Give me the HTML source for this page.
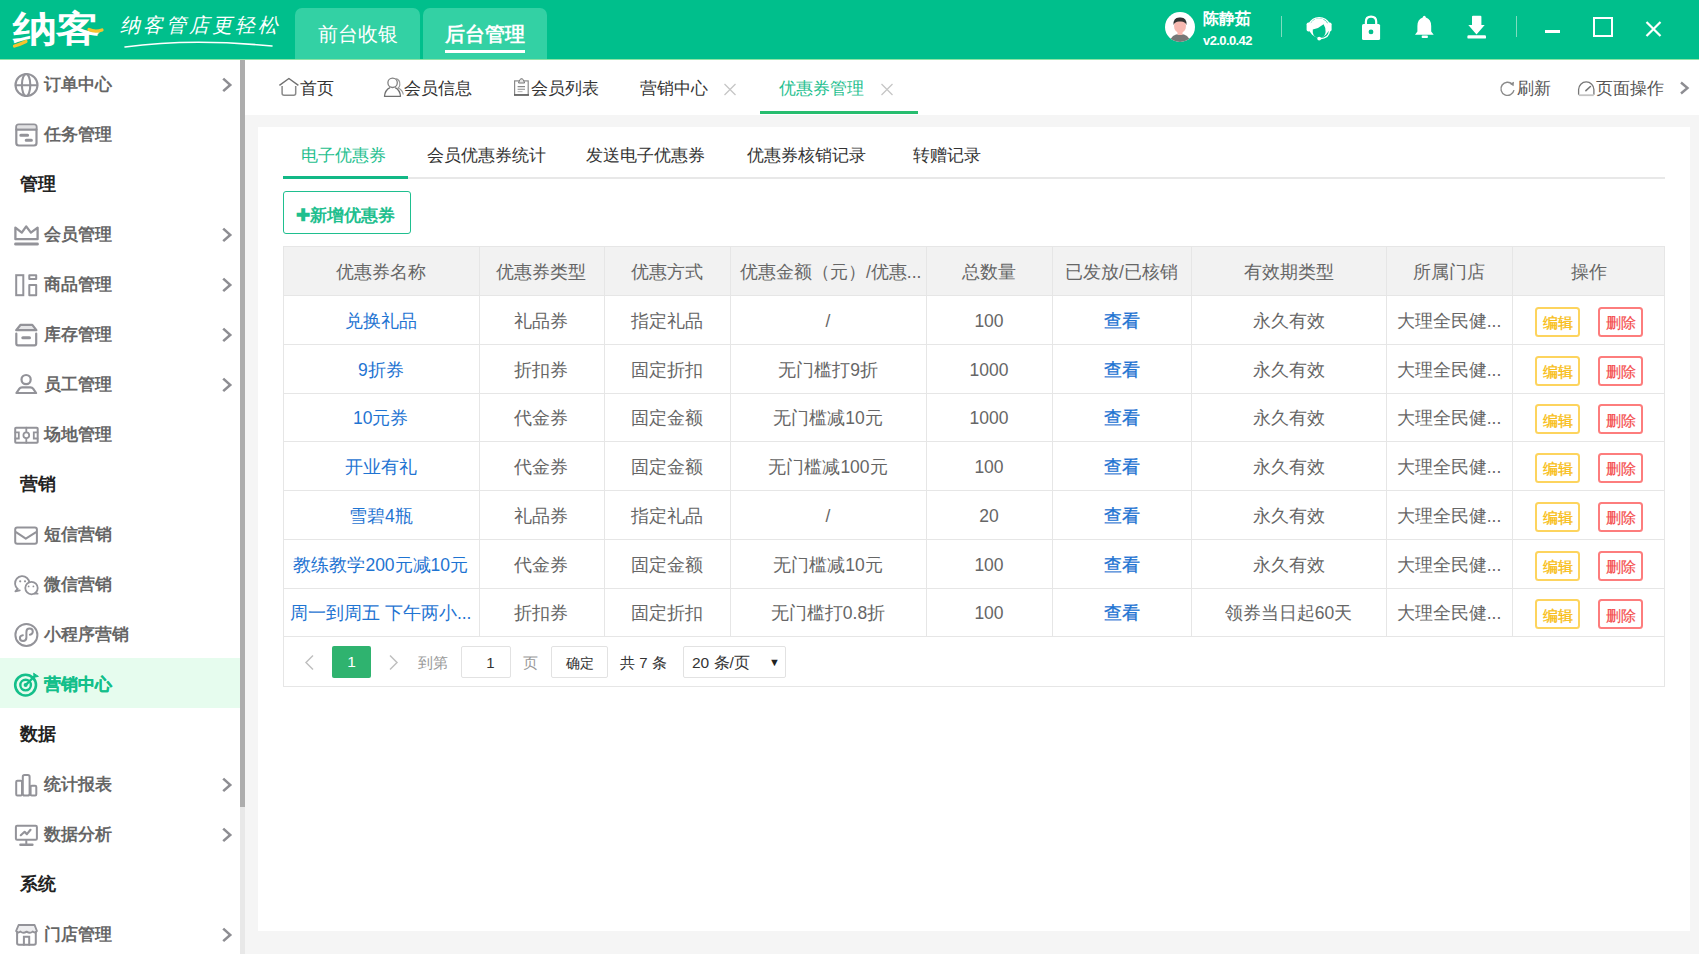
<!DOCTYPE html>
<html><head><meta charset="utf-8">
<style>
*{margin:0;padding:0;box-sizing:border-box}
html,body{width:1699px;height:954px;overflow:hidden;background:#f5f5f5;font-family:"Liberation Sans",sans-serif;position:relative}
.abs{position:absolute}
svg.abs{overflow:visible}
.t{position:absolute;white-space:nowrap}
</style></head><body>
<div class="abs" style="left:0px;top:0px;width:1699px;height:59px;background:#00bf8c"></div>
<div class="abs" style="left:0px;top:59px;width:1699px;height:1px;background:#8fe3a6"></div>
<div class="t" style="left:13px;top:9.00px;font-size:41px;height:41px;line-height:41px;color:#fff;font-weight:900;letter-spacing:-1px;transform:scale(1.08,0.88);transform-origin:0 50%;">纳客</div>
<svg class="abs" style="left:0px;top:0px" width="120" height="58" viewBox="0 0 120 58"><path d="M14.5 46 Q20 44.5 26 41.5" stroke="#f7c32e" stroke-width="3.2" fill="none" stroke-linecap="round"/><path d="M89 29.5 Q95 32.5 102 30" stroke="#f7c32e" stroke-width="3.2" fill="none" stroke-linecap="round"/></svg>
<div class="t" style="left:120px;top:15.00px;font-size:20px;height:20px;line-height:20px;color:#fff;font-weight:300;font-style:italic;letter-spacing:3px;">纳客管店更轻松</div>
<svg class="abs" style="left:120px;top:38px" width="160" height="12" viewBox="0 0 160 12"><path d="M5 9 Q70 0 152 8" stroke="#fff" stroke-width="1.6" fill="none" stroke-linecap="round"/></svg>
<div class="abs" style="left:295px;top:8px;width:125px;height:51px;background:#33d1a4;border-radius:7px 7px 0 0"></div>
<div class="abs" style="left:423px;top:8px;width:124px;height:51px;background:#33d1a4;border-radius:7px 7px 0 0"></div>
<div class="t" style="left:57.5px;width:600px;text-align:center;top:24.00px;font-size:20px;height:20px;line-height:20px;color:#fff;font-weight:normal;">前台收银</div>
<div class="t" style="left:185px;width:600px;text-align:center;top:24.00px;font-size:20px;height:20px;line-height:20px;color:#fff;font-weight:bold;">后台管理</div>
<div class="abs" style="left:445px;top:49.5px;width:80px;height:3px;background:#fff"></div>
<svg class="abs" style="left:1165px;top:12px" width="30" height="30" viewBox="0 0 30 30"><circle cx="15" cy="15" r="15" fill="#fff"/><clipPath id="cav"><circle cx="15" cy="15" r="15"/></clipPath><g clip-path="url(#cav)"><path d="M5 30 Q6 22 15 22 Q24 22 25 30Z" fill="#777"/><rect x="12.5" y="18" width="5" height="5" fill="#f7b8b0"/><ellipse cx="15" cy="14" rx="6" ry="7" fill="#f7b8b0"/><path d="M8.5 13 Q8 5 15 5.5 Q22 5 21.5 13 Q20 9 15 9.5 Q10 9 8.5 13Z" fill="#333"/></g></svg>
<div class="t" style="left:1203px;top:11.00px;font-size:16px;height:16px;line-height:16px;color:#fff;font-weight:bold;">陈静茹</div>
<div class="t" style="left:1203px;top:33.50px;font-size:13px;height:13px;line-height:13px;color:#fff;font-weight:bold;letter-spacing:-0.6px;">v2.0.0.42</div>
<div class="abs" style="left:1281px;top:16px;width:1px;height:21px;background:#7fdcbf"></div>
<svg class="abs" style="left:0;top:0" width="1699" height="60" viewBox="0 0 1699 60"><path d="M1309.2 24 A11 11 0 0 1 1329.2 24" fill="none" stroke="#fff" stroke-width="1.4"/><circle cx="1319" cy="28" r="9.7" fill="#fff"/><path d="M1312.8 29.6 Q1318.5 28.5 1323.6 24.2 Q1325.8 27.5 1325.6 32 Q1325.2 37.4 1319.3 37.8 Q1313.6 37.8 1312.8 32.5Z" fill="#00bf8c"/><rect x="1306.6" y="22.5" width="4.6" height="9" rx="1.8" fill="#fff"/><rect x="1327" y="22.5" width="4.6" height="9" rx="1.8" fill="#fff"/><path d="M1329.5 31 Q1329 38 1320 38.8" fill="none" stroke="#fff" stroke-width="1.4"/><circle cx="1319.2" cy="38.6" r="1.9" fill="#fff"/><path d="M1365.9 25 V21.8 Q1365.9 16.6 1371.05 16.6 Q1376.2 16.6 1376.2 21.8 V25" fill="none" stroke="#fff" stroke-width="2.2"/><rect x="1362" y="24" width="18.1" height="16.1" rx="1.6" fill="#fff"/><circle cx="1371" cy="31.9" r="2.4" fill="#00bf8c"/><path d="M1424.3 15.8 Q1425.6 15.8 1425.9 17.6 Q1431.2 19.5 1431.2 26 V31.5 L1433.7 34.8 H1415 L1417.4 31.5 V26 Q1417.4 19.5 1422.7 17.6 Q1423 15.8 1424.3 15.8Z" fill="#fff"/><rect x="1421.7" y="35.6" width="6.2" height="2.5" rx="0.8" fill="#fff"/><path d="M1473 15.8 H1480.4 Q1481.4 15.8 1481.4 16.8 V24.9 H1484.7 L1476.5 34.4 L1468.3 24.9 H1472 V16.8 Q1472 15.8 1473 15.8Z" fill="#fff"/><rect x="1467.4" y="35.2" width="18.6" height="3.4" rx="1.2" fill="#fff"/></svg>
<div class="abs" style="left:1516px;top:16px;width:1px;height:21px;background:#7fdcbf"></div>
<div class="abs" style="left:1545px;top:30px;width:15px;height:2.5px;background:#fff"></div>
<div class="abs" style="left:1593px;top:17px;width:20px;height:20px;border:2.2px solid #fff"></div>
<svg class="abs" style="left:1645px;top:21px" width="17" height="16" viewBox="0 0 17 16"><path d="M1.5 1 L15.5 15 M15.5 1 L1.5 15" stroke="#fff" stroke-width="2.2"/></svg>
<div class="abs" style="left:0px;top:60px;width:240px;height:894px;background:#fff"></div>
<div class="abs" style="left:240px;top:60px;width:5px;height:894px;background:#e8e8e8"></div>
<div class="abs" style="left:240px;top:60px;width:5px;height:747px;background:#adadad"></div>
<div class="abs" style="left:245px;top:60px;width:13px;height:894px;background:#f5f5f5"></div>
<div class="abs" style="left:0px;top:658px;width:240px;height:50px;background:#e6fcee"></div>
<div class="t" style="left:43.5px;top:75.75px;font-size:16.5px;height:16.5px;line-height:16.5px;color:#666;font-weight:bold;">订单中心</div>
<div class="t" style="left:43.5px;top:125.75px;font-size:16.5px;height:16.5px;line-height:16.5px;color:#666;font-weight:bold;">任务管理</div>
<div class="t" style="left:20px;top:175.00px;font-size:18px;height:18px;line-height:18px;color:#222;font-weight:bold;">管理</div>
<div class="t" style="left:43.5px;top:225.75px;font-size:16.5px;height:16.5px;line-height:16.5px;color:#666;font-weight:bold;">会员管理</div>
<div class="t" style="left:43.5px;top:275.75px;font-size:16.5px;height:16.5px;line-height:16.5px;color:#666;font-weight:bold;">商品管理</div>
<div class="t" style="left:43.5px;top:325.75px;font-size:16.5px;height:16.5px;line-height:16.5px;color:#666;font-weight:bold;">库存管理</div>
<div class="t" style="left:43.5px;top:375.75px;font-size:16.5px;height:16.5px;line-height:16.5px;color:#666;font-weight:bold;">员工管理</div>
<div class="t" style="left:43.5px;top:425.75px;font-size:16.5px;height:16.5px;line-height:16.5px;color:#666;font-weight:bold;">场地管理</div>
<div class="t" style="left:20px;top:475.00px;font-size:18px;height:18px;line-height:18px;color:#222;font-weight:bold;">营销</div>
<div class="t" style="left:43.5px;top:525.75px;font-size:16.5px;height:16.5px;line-height:16.5px;color:#666;font-weight:bold;">短信营销</div>
<div class="t" style="left:43.5px;top:575.75px;font-size:16.5px;height:16.5px;line-height:16.5px;color:#666;font-weight:bold;">微信营销</div>
<div class="t" style="left:43.5px;top:625.75px;font-size:16.5px;height:16.5px;line-height:16.5px;color:#666;font-weight:bold;">小程序营销</div>
<div class="t" style="left:43.5px;top:675.75px;font-size:16.5px;height:16.5px;line-height:16.5px;color:#14bf8a;font-weight:bold;-webkit-text-stroke:0.25px #14bf8a;">营销中心</div>
<div class="t" style="left:20px;top:725.00px;font-size:18px;height:18px;line-height:18px;color:#222;font-weight:bold;">数据</div>
<div class="t" style="left:43.5px;top:775.75px;font-size:16.5px;height:16.5px;line-height:16.5px;color:#666;font-weight:bold;">统计报表</div>
<div class="t" style="left:43.5px;top:825.75px;font-size:16.5px;height:16.5px;line-height:16.5px;color:#666;font-weight:bold;">数据分析</div>
<div class="t" style="left:20px;top:875.00px;font-size:18px;height:18px;line-height:18px;color:#222;font-weight:bold;">系统</div>
<div class="t" style="left:43.5px;top:925.75px;font-size:16.5px;height:16.5px;line-height:16.5px;color:#666;font-weight:bold;">门店管理</div>
<svg class="abs" style="left:0;top:0" width="240" height="954" viewBox="0 0 240 954"><circle cx="26.5" cy="85" r="11" fill="none" stroke="#939399" stroke-width="2.1" stroke-linecap="round" stroke-linejoin="round"/><ellipse cx="26.1" cy="85" rx="4.2" ry="11" fill="none" stroke="#939399" stroke-width="2.1" stroke-linecap="round" stroke-linejoin="round"/><path d="M15.8 85.3 H37.2" fill="none" stroke="#939399" stroke-width="2.1" stroke-linecap="round" stroke-linejoin="round"/><rect x="16.3" y="124.5" width="20.2" height="21" rx="2.5" fill="none" stroke="#939399" stroke-width="2.2" stroke-linecap="round" stroke-linejoin="round"/><rect x="17.3" y="125.6" width="18.2" height="3" fill="#e2e2e4"/><path d="M16.3 129.6 H36.5" fill="none" stroke="#939399" stroke-width="2.1" stroke-linecap="round" stroke-linejoin="round"/><path d="M20.8 135.3 H27.6 M26.2 140.3 H31.4" fill="none" stroke="#939399" stroke-width="3" stroke-linecap="round" stroke-linejoin="round"/><path d="M15.4 227.6 L21.8 232.6 L26.2 226.4 L30.9 232.6 L37.6 227.6 V239.2 H15.4 Z" fill="none" stroke="#939399" stroke-width="2.3" stroke-linecap="round" stroke-linejoin="round"/><rect x="14.2" y="242.4" width="24.6" height="3.2" rx="1.4" fill="#939399"/><rect x="16.2" y="275.2" width="7.1" height="20" fill="none" stroke="#939399" stroke-width="2" stroke-linecap="round" stroke-linejoin="miter"/><rect x="29.3" y="275.2" width="6.9" height="3.8" fill="none" stroke="#939399" stroke-width="2" stroke-linecap="round" stroke-linejoin="round"/><rect x="29.3" y="284.9" width="6.9" height="10.3" fill="none" stroke="#939399" stroke-width="2" stroke-linecap="round" stroke-linejoin="round"/><path d="M20.6 324.8 H32.3 L36.4 330.2 H16.2 Z" fill="#e6e6e8" stroke="#939399" stroke-width="2.2" stroke-linecap="round" stroke-linejoin="round"/><path d="M16.3 333.6 V343.6 Q16.3 345.4 18 345.4 H34.5 Q36.2 345.4 36.2 343.6 V333.6" fill="none" stroke="#939399" stroke-width="2.2" stroke-linecap="round" stroke-linejoin="round"/><path d="M22.8 337.8 H29.5" fill="none" stroke="#939399" stroke-width="3" stroke-linecap="round" stroke-linejoin="round"/><circle cx="26.1" cy="379.6" r="4.6" fill="none" stroke="#939399" stroke-width="2.2" stroke-linecap="round" stroke-linejoin="round"/><path d="M16.4 393 L19.4 388.6 Q20.3 387.3 22 387.3 H30.5 Q32.2 387.3 33.1 388.6 L36.1 393 Z" fill="none" stroke="#939399" stroke-width="2.2" stroke-linecap="round" stroke-linejoin="round"/><rect x="15.2" y="427.7" width="22.5" height="15.1" rx="0.8" fill="none" stroke="#939399" stroke-width="2" stroke-linecap="round" stroke-linejoin="round"/><path d="M26.3 427.7 V442.8" fill="none" stroke="#939399" stroke-width="1.8" stroke-linecap="round" stroke-linejoin="round"/><circle cx="26.3" cy="435.3" r="2.9" fill="#fff" stroke="#939399" stroke-width="1.8" stroke-linecap="round" stroke-linejoin="round"/><path d="M15.4 432.4 H18.8 V438.5 H15.4 M37.5 432.4 H33.8 V438.5 H37.5" fill="none" stroke="#939399" stroke-width="1.8" stroke-linecap="round" stroke-linejoin="miter"/><rect x="15.2" y="527.6" width="21.7" height="16.1" rx="2" fill="none" stroke="#939399" stroke-width="2" stroke-linecap="round" stroke-linejoin="round"/><path d="M16 532.2 L25.8 538.7 L36.1 532.2" fill="none" stroke="#939399" stroke-width="2" stroke-linecap="round" stroke-linejoin="round"/><path d="M17.6 588.9 A7.2 7.2 0 1 1 27.6 588.2" fill="none" stroke="#939399" stroke-width="1.8" stroke-linecap="round" stroke-linejoin="round"/><path d="M17.6 588.9 L15.4 591.3 L19.8 590.3" fill="none" stroke="#939399" stroke-width="1.8" stroke-linecap="round" stroke-linejoin="round"/><circle cx="20.2" cy="581.3" r="1.1" fill="#939399"/><circle cx="25" cy="581.3" r="1.1" fill="#939399"/><circle cx="31.5" cy="588.1" r="6.2" fill="#fff" stroke="#939399" stroke-width="1.8" stroke-linecap="round" stroke-linejoin="round"/><path d="M35.8 592.6 L37.7 593.8 L34.2 593.8" fill="none" stroke="#939399" stroke-width="1.6" stroke-linecap="round" stroke-linejoin="round"/><circle cx="28.6" cy="586.4" r="0.9" fill="#939399"/><circle cx="33.4" cy="586.4" r="0.9" fill="#939399"/><circle cx="26.4" cy="634.9" r="11" fill="none" stroke="#939399" stroke-width="2" stroke-linecap="round" stroke-linejoin="round"/><path d="M29.9 634.7 Q32.8 634.3 32.8 631.6 Q32.8 628.6 29.6 628.6 Q26.4 628.6 26.4 632 V637.6 Q26.4 641 23.1 641 Q19.9 641 19.9 638 Q19.9 635.5 22.9 635.2" fill="none" stroke="#939399" stroke-width="2" stroke-linecap="round" stroke-linejoin="round"/><circle cx="25.6" cy="685.1" r="10.4" fill="none" stroke="#14bf8a" stroke-width="2.6"/><circle cx="25.6" cy="685.1" r="5.3" fill="none" stroke="#14bf8a" stroke-width="2.4"/><circle cx="25.6" cy="685.1" r="2" fill="#14bf8a"/><path d="M25.6 685.1 L34.6 676.1" stroke="#14bf8a" stroke-width="2.3"/><path d="M33.6 673.2 L38.4 676.4 L34.3 677.2Z" fill="#14bf8a" stroke="#14bf8a" stroke-width="1" stroke-linejoin="round"/><rect x="16.2" y="780.7" width="5.8" height="14.8" rx="1.2" fill="none" stroke="#939399" stroke-width="2" stroke-linecap="round" stroke-linejoin="round"/><rect x="22.8" y="774.9" width="6.8" height="20.6" rx="1.8" fill="none" stroke="#939399" stroke-width="2" stroke-linecap="round" stroke-linejoin="round"/><rect x="30.6" y="785.8" width="5.7" height="9.7" rx="1.2" fill="none" stroke="#939399" stroke-width="2" stroke-linecap="round" stroke-linejoin="round"/><rect x="15.9" y="825.7" width="21" height="14" rx="1.2" fill="none" stroke="#939399" stroke-width="2" stroke-linecap="round" stroke-linejoin="round"/><path d="M26.3 840.7 V844.5" fill="none" stroke="#939399" stroke-width="2" stroke-linecap="round" stroke-linejoin="round"/><path d="M20.4 844.8 H32.4" fill="none" stroke="#939399" stroke-width="2.4" stroke-linecap="round" stroke-linejoin="round"/><path d="M20.8 835.2 L24.6 831.8 L26.9 834.1 L30.5 829.8" fill="none" stroke="#939399" stroke-width="2.2" stroke-linecap="round" stroke-linejoin="round"/><path d="M18.6 925 H34.6 L36.9 931 Q35.3 933.6 32.6 931.6 Q30 933.9 26.6 931.6 Q23.2 933.9 20.6 931.6 Q17.8 933.6 16.1 931 Z" fill="#eeeef0" stroke="#939399" stroke-width="1.9" stroke-linecap="round" stroke-linejoin="round"/><path d="M17.1 932 V943 Q17.1 944.8 18.9 944.8 H34 Q35.8 944.8 35.8 943 V932" fill="none" stroke="#939399" stroke-width="2" stroke-linecap="round" stroke-linejoin="round"/><path d="M23.9 944.8 V936.8 H29.2 V944.8" fill="none" stroke="#939399" stroke-width="2" stroke-linecap="round" stroke-linejoin="miter"/><path d="M223.2 78.6 L230.2 84.9 L223.2 91.1" fill="none" stroke="#8d8d92" stroke-width="2.6"/><path d="M223.2 228.6 L230.2 234.9 L223.2 241.1" fill="none" stroke="#8d8d92" stroke-width="2.6"/><path d="M223.2 278.6 L230.2 284.9 L223.2 291.1" fill="none" stroke="#8d8d92" stroke-width="2.6"/><path d="M223.2 328.6 L230.2 334.9 L223.2 341.1" fill="none" stroke="#8d8d92" stroke-width="2.6"/><path d="M223.2 378.6 L230.2 384.9 L223.2 391.1" fill="none" stroke="#8d8d92" stroke-width="2.6"/><path d="M223.2 778.6 L230.2 784.9 L223.2 791.1" fill="none" stroke="#8d8d92" stroke-width="2.6"/><path d="M223.2 828.6 L230.2 834.9 L223.2 841.1" fill="none" stroke="#8d8d92" stroke-width="2.6"/><path d="M223.2 928.6 L230.2 934.9 L223.2 941.1" fill="none" stroke="#8d8d92" stroke-width="2.6"/></svg>
<div class="abs" style="left:245px;top:60px;width:1454px;height:55px;background:#fff"></div>
<div class="abs" style="left:245px;top:115px;width:1454px;height:12px;background:#f5f5f5"></div>
<svg class="abs" style="left:0;top:0" width="700" height="110" viewBox="0 0 700 110"><path d="M279.4 85.4 L288.9 78.5 L298.4 85.4" fill="none" stroke="#707070" stroke-width="1.4" stroke-linejoin="round"/><path d="M282.1 86 V93.2 Q282.1 95.2 284.1 95.2 H293.7 Q295.7 95.2 295.7 93.2 V86" fill="none" stroke="#8a8a8a" stroke-width="1.5"/><circle cx="392.6" cy="82.8" r="4.7" fill="none" stroke="#808080" stroke-width="1.3"/><path d="M390 87.6 Q385 90 384.5 96.3 H400.5 Q400 90 395.2 87.6" fill="none" stroke="#707070" stroke-width="1.3" stroke-linejoin="round"/><path d="M395.5 78.6 Q400.4 79.6 399.8 85 Q399.5 87 398.2 88 Q402.5 90 403.3 94.5" fill="none" stroke="#999" stroke-width="1.2"/><rect x="514.6" y="80.9" width="13.6" height="14" fill="none" stroke="#8a8a8a" stroke-width="1.2"/><path d="M514 95 H529" stroke="#555" stroke-width="1.4"/><path d="M519.3 80.9 L520.6 78.8 H522.5 L523.8 80.9 L524.6 83 H518.5Z" fill="#e6e6e6" stroke="#777" stroke-width="1"/><path d="M517.6 86.6 H525 M517.6 89.2 H525" stroke="#888" stroke-width="1.1"/><path d="M517.6 91.6 H522.5" stroke="#bbb" stroke-width="1.1"/></svg>
<div class="t" style="left:300px;top:80.00px;font-size:17px;height:17px;line-height:17px;color:#333;font-weight:normal;">首页</div>
<div class="t" style="left:404px;top:80.00px;font-size:17px;height:17px;line-height:17px;color:#333;font-weight:normal;">会员信息</div>
<div class="t" style="left:531px;top:80.00px;font-size:17px;height:17px;line-height:17px;color:#333;font-weight:normal;">会员列表</div>
<div class="t" style="left:640px;top:80.00px;font-size:17px;height:17px;line-height:17px;color:#333;font-weight:normal;">营销中心</div>
<svg class="abs" style="left:723px;top:83px" width="14" height="13" viewBox="0 0 14 13"><path d="M1.5 1 L12.5 12 M12.5 1 L1.5 12" stroke="#c6c6c6" stroke-width="1.3"/></svg>
<div class="t" style="left:779px;top:80.00px;font-size:17px;height:17px;line-height:17px;color:#1fbf8f;font-weight:normal;">优惠券管理</div>
<svg class="abs" style="left:880px;top:83px" width="14" height="13" viewBox="0 0 14 13"><path d="M1.5 1 L12.5 12 M12.5 1 L1.5 12" stroke="#c6c6c6" stroke-width="1.3"/></svg>
<div class="abs" style="left:760px;top:111px;width:158px;height:3px;background:#27bd6f"></div>
<svg class="abs" style="left:1499px;top:80px" width="17" height="17" viewBox="0 0 17 17"><path d="M13.3 4.2 A6.6 6.6 0 1 0 15 10.2" stroke="#8a8a8a" stroke-width="1.4" fill="none"/><path d="M10.6 3.7 L15 1.8 L14.6 6.3Z" fill="#8a8a8a"/></svg>
<div class="t" style="left:1517px;top:80.00px;font-size:17px;height:17px;line-height:17px;color:#555;font-weight:normal;">刷新</div>
<svg class="abs" style="left:1577px;top:80px" width="19" height="17" viewBox="0 0 19 17"><path d="M1.6 14.8 V9.6 A7.65 7.65 0 0 1 16.9 9.6 V14.8" stroke="#777" stroke-width="1.3" fill="none"/><path d="M1.8 15.2 H16.7" stroke="#c4c4c4" stroke-width="1.8"/><path d="M8.9 10.6 L13.4 6.5" stroke="#777" stroke-width="1.6" stroke-linecap="round"/></svg>
<div class="t" style="left:1596px;top:80.00px;font-size:17px;height:17px;line-height:17px;color:#555;font-weight:normal;">页面操作</div>
<svg class="abs" style="left:1679px;top:81px" width="11" height="14" viewBox="0 0 11 14"><path d="M2 1.5 L8.5 7 L2 12.5" stroke="#8d8d92" stroke-width="2.4" fill="none"/></svg>
<div class="abs" style="left:258px;top:127px;width:1432px;height:804px;background:#fff"></div>
<div class="abs" style="left:1690px;top:115px;width:9px;height:839px;background:#f5f5f5"></div>
<div class="abs" style="left:258px;top:931px;width:1441px;height:23px;background:#f5f5f5"></div>
<div class="abs" style="left:283px;top:177px;width:1382px;height:1.5px;background:#e8e8e8"></div>
<div class="abs" style="left:283px;top:175.5px;width:125px;height:3px;background:#12b886"></div>
<div class="t" style="left:301px;top:146.50px;font-size:17px;height:17px;line-height:17px;color:#1fbf8f;font-weight:normal;">电子优惠券</div>
<div class="t" style="left:427px;top:146.50px;font-size:17px;height:17px;line-height:17px;color:#333;font-weight:normal;">会员优惠券统计</div>
<div class="t" style="left:586px;top:146.50px;font-size:17px;height:17px;line-height:17px;color:#333;font-weight:normal;">发送电子优惠券</div>
<div class="t" style="left:747px;top:146.50px;font-size:17px;height:17px;line-height:17px;color:#333;font-weight:normal;">优惠券核销记录</div>
<div class="t" style="left:913px;top:146.50px;font-size:17px;height:17px;line-height:17px;color:#333;font-weight:normal;">转赠记录</div>
<div class="abs" style="left:283px;top:191px;width:128px;height:43px;border:1.5px solid #1fbf8f;border-radius:3px"></div>
<div class="t" style="left:296px;top:206.50px;font-size:17px;height:17px;line-height:17px;color:#1fbf8f;font-weight:bold;">✚新增优惠券</div>
<div class="abs" style="left:283px;top:246px;width:1382px;height:49px;background:#f2f2f2"></div>
<div class="abs" style="left:283px;top:246px;width:1382px;height:441px;border:1px solid #e6e6e6"></div>
<div class="abs" style="left:283px;top:295px;width:1382px;height:1px;background:#e6e6e6"></div>
<div class="abs" style="left:283px;top:344px;width:1382px;height:1px;background:#e6e6e6"></div>
<div class="abs" style="left:283px;top:393px;width:1382px;height:1px;background:#e6e6e6"></div>
<div class="abs" style="left:283px;top:441px;width:1382px;height:1px;background:#e6e6e6"></div>
<div class="abs" style="left:283px;top:490px;width:1382px;height:1px;background:#e6e6e6"></div>
<div class="abs" style="left:283px;top:539px;width:1382px;height:1px;background:#e6e6e6"></div>
<div class="abs" style="left:283px;top:588px;width:1382px;height:1px;background:#e6e6e6"></div>
<div class="abs" style="left:283px;top:636px;width:1382px;height:1px;background:#e6e6e6"></div>
<div class="abs" style="left:478.5px;top:246px;width:1px;height:390px;background:#e6e6e6"></div>
<div class="abs" style="left:604px;top:246px;width:1px;height:390px;background:#e6e6e6"></div>
<div class="abs" style="left:730px;top:246px;width:1px;height:390px;background:#e6e6e6"></div>
<div class="abs" style="left:926px;top:246px;width:1px;height:390px;background:#e6e6e6"></div>
<div class="abs" style="left:1052px;top:246px;width:1px;height:390px;background:#e6e6e6"></div>
<div class="abs" style="left:1191px;top:246px;width:1px;height:390px;background:#e6e6e6"></div>
<div class="abs" style="left:1386px;top:246px;width:1px;height:390px;background:#e6e6e6"></div>
<div class="abs" style="left:1512px;top:246px;width:1px;height:390px;background:#e6e6e6"></div>
<div class="t" style="left:80.75px;width:600px;text-align:center;top:264.25px;font-size:17.5px;height:17.5px;line-height:17.5px;color:#666;font-weight:normal;">优惠券名称</div>
<div class="t" style="left:241.25px;width:600px;text-align:center;top:264.25px;font-size:17.5px;height:17.5px;line-height:17.5px;color:#666;font-weight:normal;">优惠券类型</div>
<div class="t" style="left:367.0px;width:600px;text-align:center;top:264.25px;font-size:17.5px;height:17.5px;line-height:17.5px;color:#666;font-weight:normal;">优惠方式</div>
<div class="t" style="left:740px;top:264.25px;font-size:17.5px;height:17.5px;line-height:17.5px;color:#666;font-weight:normal;">优惠金额（元）/优惠...</div>
<div class="t" style="left:689.0px;width:600px;text-align:center;top:264.25px;font-size:17.5px;height:17.5px;line-height:17.5px;color:#666;font-weight:normal;">总数量</div>
<div class="t" style="left:821.5px;width:600px;text-align:center;top:264.25px;font-size:17.5px;height:17.5px;line-height:17.5px;color:#666;font-weight:normal;">已发放/已核销</div>
<div class="t" style="left:988.5px;width:600px;text-align:center;top:264.25px;font-size:17.5px;height:17.5px;line-height:17.5px;color:#666;font-weight:normal;">有效期类型</div>
<div class="t" style="left:1149.0px;width:600px;text-align:center;top:264.25px;font-size:17.5px;height:17.5px;line-height:17.5px;color:#666;font-weight:normal;">所属门店</div>
<div class="t" style="left:1288.5px;width:600px;text-align:center;top:264.25px;font-size:17.5px;height:17.5px;line-height:17.5px;color:#666;font-weight:normal;">操作</div>
<div class="t" style="left:80.75px;width:600px;text-align:center;top:312.75px;font-size:17.5px;height:17.5px;line-height:17.5px;color:#1f74d2;font-weight:normal;">兑换礼品</div>
<div class="t" style="left:241.25px;width:600px;text-align:center;top:312.75px;font-size:17.5px;height:17.5px;line-height:17.5px;color:#666;font-weight:normal;">礼品券</div>
<div class="t" style="left:367.0px;width:600px;text-align:center;top:312.75px;font-size:17.5px;height:17.5px;line-height:17.5px;color:#666;font-weight:normal;">指定礼品</div>
<div class="t" style="left:528.0px;width:600px;text-align:center;top:312.75px;font-size:17.5px;height:17.5px;line-height:17.5px;color:#666;font-weight:normal;">/</div>
<div class="t" style="left:689.0px;width:600px;text-align:center;top:312.75px;font-size:17.5px;height:17.5px;line-height:17.5px;color:#666;font-weight:normal;">100</div>
<div class="t" style="left:821.5px;width:600px;text-align:center;top:312.75px;font-size:17.5px;height:17.5px;line-height:17.5px;color:#1f74d2;font-weight:normal;-webkit-text-stroke:0.3px #1f74d2;">查看</div>
<div class="t" style="left:988.5px;width:600px;text-align:center;top:312.75px;font-size:17.5px;height:17.5px;line-height:17.5px;color:#666;font-weight:normal;">永久有效</div>
<div class="t" style="left:1149.0px;width:600px;text-align:center;top:312.75px;font-size:17.5px;height:17.5px;line-height:17.5px;color:#666;font-weight:normal;">大理全民健...</div>
<div class="abs" style="left:1535px;top:306.5px;width:45px;height:30px;border:2px solid #fdd45e;border-radius:3.5px"></div>
<div class="t" style="left:1257.5px;width:600px;text-align:center;top:315.00px;font-size:15px;height:15px;line-height:15px;color:#f8bd12;font-weight:normal;-webkit-text-stroke:0.35px #f8bd12;">编辑</div>
<div class="abs" style="left:1598px;top:306.5px;width:45px;height:30px;border:2px solid #fd7d7d;border-radius:3.5px"></div>
<div class="t" style="left:1320.5px;width:600px;text-align:center;top:315.00px;font-size:15px;height:15px;line-height:15px;color:#f44c4c;font-weight:normal;-webkit-text-stroke:0.2px #f44c4c;">删除</div>
<div class="t" style="left:80.75px;width:600px;text-align:center;top:361.75px;font-size:17.5px;height:17.5px;line-height:17.5px;color:#1f74d2;font-weight:normal;">9折券</div>
<div class="t" style="left:241.25px;width:600px;text-align:center;top:361.75px;font-size:17.5px;height:17.5px;line-height:17.5px;color:#666;font-weight:normal;">折扣券</div>
<div class="t" style="left:367.0px;width:600px;text-align:center;top:361.75px;font-size:17.5px;height:17.5px;line-height:17.5px;color:#666;font-weight:normal;">固定折扣</div>
<div class="t" style="left:528.0px;width:600px;text-align:center;top:361.75px;font-size:17.5px;height:17.5px;line-height:17.5px;color:#666;font-weight:normal;">无门槛打9折</div>
<div class="t" style="left:689.0px;width:600px;text-align:center;top:361.75px;font-size:17.5px;height:17.5px;line-height:17.5px;color:#666;font-weight:normal;">1000</div>
<div class="t" style="left:821.5px;width:600px;text-align:center;top:361.75px;font-size:17.5px;height:17.5px;line-height:17.5px;color:#1f74d2;font-weight:normal;-webkit-text-stroke:0.3px #1f74d2;">查看</div>
<div class="t" style="left:988.5px;width:600px;text-align:center;top:361.75px;font-size:17.5px;height:17.5px;line-height:17.5px;color:#666;font-weight:normal;">永久有效</div>
<div class="t" style="left:1149.0px;width:600px;text-align:center;top:361.75px;font-size:17.5px;height:17.5px;line-height:17.5px;color:#666;font-weight:normal;">大理全民健...</div>
<div class="abs" style="left:1535px;top:355.5px;width:45px;height:30px;border:2px solid #fdd45e;border-radius:3.5px"></div>
<div class="t" style="left:1257.5px;width:600px;text-align:center;top:364.00px;font-size:15px;height:15px;line-height:15px;color:#f8bd12;font-weight:normal;-webkit-text-stroke:0.35px #f8bd12;">编辑</div>
<div class="abs" style="left:1598px;top:355.5px;width:45px;height:30px;border:2px solid #fd7d7d;border-radius:3.5px"></div>
<div class="t" style="left:1320.5px;width:600px;text-align:center;top:364.00px;font-size:15px;height:15px;line-height:15px;color:#f44c4c;font-weight:normal;-webkit-text-stroke:0.2px #f44c4c;">删除</div>
<div class="t" style="left:80.75px;width:600px;text-align:center;top:410.25px;font-size:17.5px;height:17.5px;line-height:17.5px;color:#1f74d2;font-weight:normal;">10元券</div>
<div class="t" style="left:241.25px;width:600px;text-align:center;top:410.25px;font-size:17.5px;height:17.5px;line-height:17.5px;color:#666;font-weight:normal;">代金券</div>
<div class="t" style="left:367.0px;width:600px;text-align:center;top:410.25px;font-size:17.5px;height:17.5px;line-height:17.5px;color:#666;font-weight:normal;">固定金额</div>
<div class="t" style="left:528.0px;width:600px;text-align:center;top:410.25px;font-size:17.5px;height:17.5px;line-height:17.5px;color:#666;font-weight:normal;">无门槛减10元</div>
<div class="t" style="left:689.0px;width:600px;text-align:center;top:410.25px;font-size:17.5px;height:17.5px;line-height:17.5px;color:#666;font-weight:normal;">1000</div>
<div class="t" style="left:821.5px;width:600px;text-align:center;top:410.25px;font-size:17.5px;height:17.5px;line-height:17.5px;color:#1f74d2;font-weight:normal;-webkit-text-stroke:0.3px #1f74d2;">查看</div>
<div class="t" style="left:988.5px;width:600px;text-align:center;top:410.25px;font-size:17.5px;height:17.5px;line-height:17.5px;color:#666;font-weight:normal;">永久有效</div>
<div class="t" style="left:1149.0px;width:600px;text-align:center;top:410.25px;font-size:17.5px;height:17.5px;line-height:17.5px;color:#666;font-weight:normal;">大理全民健...</div>
<div class="abs" style="left:1535px;top:404.0px;width:45px;height:30px;border:2px solid #fdd45e;border-radius:3.5px"></div>
<div class="t" style="left:1257.5px;width:600px;text-align:center;top:412.50px;font-size:15px;height:15px;line-height:15px;color:#f8bd12;font-weight:normal;-webkit-text-stroke:0.35px #f8bd12;">编辑</div>
<div class="abs" style="left:1598px;top:404.0px;width:45px;height:30px;border:2px solid #fd7d7d;border-radius:3.5px"></div>
<div class="t" style="left:1320.5px;width:600px;text-align:center;top:412.50px;font-size:15px;height:15px;line-height:15px;color:#f44c4c;font-weight:normal;-webkit-text-stroke:0.2px #f44c4c;">删除</div>
<div class="t" style="left:80.75px;width:600px;text-align:center;top:458.75px;font-size:17.5px;height:17.5px;line-height:17.5px;color:#1f74d2;font-weight:normal;">开业有礼</div>
<div class="t" style="left:241.25px;width:600px;text-align:center;top:458.75px;font-size:17.5px;height:17.5px;line-height:17.5px;color:#666;font-weight:normal;">代金券</div>
<div class="t" style="left:367.0px;width:600px;text-align:center;top:458.75px;font-size:17.5px;height:17.5px;line-height:17.5px;color:#666;font-weight:normal;">固定金额</div>
<div class="t" style="left:528.0px;width:600px;text-align:center;top:458.75px;font-size:17.5px;height:17.5px;line-height:17.5px;color:#666;font-weight:normal;">无门槛减100元</div>
<div class="t" style="left:689.0px;width:600px;text-align:center;top:458.75px;font-size:17.5px;height:17.5px;line-height:17.5px;color:#666;font-weight:normal;">100</div>
<div class="t" style="left:821.5px;width:600px;text-align:center;top:458.75px;font-size:17.5px;height:17.5px;line-height:17.5px;color:#1f74d2;font-weight:normal;-webkit-text-stroke:0.3px #1f74d2;">查看</div>
<div class="t" style="left:988.5px;width:600px;text-align:center;top:458.75px;font-size:17.5px;height:17.5px;line-height:17.5px;color:#666;font-weight:normal;">永久有效</div>
<div class="t" style="left:1149.0px;width:600px;text-align:center;top:458.75px;font-size:17.5px;height:17.5px;line-height:17.5px;color:#666;font-weight:normal;">大理全民健...</div>
<div class="abs" style="left:1535px;top:452.5px;width:45px;height:30px;border:2px solid #fdd45e;border-radius:3.5px"></div>
<div class="t" style="left:1257.5px;width:600px;text-align:center;top:461.00px;font-size:15px;height:15px;line-height:15px;color:#f8bd12;font-weight:normal;-webkit-text-stroke:0.35px #f8bd12;">编辑</div>
<div class="abs" style="left:1598px;top:452.5px;width:45px;height:30px;border:2px solid #fd7d7d;border-radius:3.5px"></div>
<div class="t" style="left:1320.5px;width:600px;text-align:center;top:461.00px;font-size:15px;height:15px;line-height:15px;color:#f44c4c;font-weight:normal;-webkit-text-stroke:0.2px #f44c4c;">删除</div>
<div class="t" style="left:80.75px;width:600px;text-align:center;top:507.75px;font-size:17.5px;height:17.5px;line-height:17.5px;color:#1f74d2;font-weight:normal;">雪碧4瓶</div>
<div class="t" style="left:241.25px;width:600px;text-align:center;top:507.75px;font-size:17.5px;height:17.5px;line-height:17.5px;color:#666;font-weight:normal;">礼品券</div>
<div class="t" style="left:367.0px;width:600px;text-align:center;top:507.75px;font-size:17.5px;height:17.5px;line-height:17.5px;color:#666;font-weight:normal;">指定礼品</div>
<div class="t" style="left:528.0px;width:600px;text-align:center;top:507.75px;font-size:17.5px;height:17.5px;line-height:17.5px;color:#666;font-weight:normal;">/</div>
<div class="t" style="left:689.0px;width:600px;text-align:center;top:507.75px;font-size:17.5px;height:17.5px;line-height:17.5px;color:#666;font-weight:normal;">20</div>
<div class="t" style="left:821.5px;width:600px;text-align:center;top:507.75px;font-size:17.5px;height:17.5px;line-height:17.5px;color:#1f74d2;font-weight:normal;-webkit-text-stroke:0.3px #1f74d2;">查看</div>
<div class="t" style="left:988.5px;width:600px;text-align:center;top:507.75px;font-size:17.5px;height:17.5px;line-height:17.5px;color:#666;font-weight:normal;">永久有效</div>
<div class="t" style="left:1149.0px;width:600px;text-align:center;top:507.75px;font-size:17.5px;height:17.5px;line-height:17.5px;color:#666;font-weight:normal;">大理全民健...</div>
<div class="abs" style="left:1535px;top:501.5px;width:45px;height:30px;border:2px solid #fdd45e;border-radius:3.5px"></div>
<div class="t" style="left:1257.5px;width:600px;text-align:center;top:510.00px;font-size:15px;height:15px;line-height:15px;color:#f8bd12;font-weight:normal;-webkit-text-stroke:0.35px #f8bd12;">编辑</div>
<div class="abs" style="left:1598px;top:501.5px;width:45px;height:30px;border:2px solid #fd7d7d;border-radius:3.5px"></div>
<div class="t" style="left:1320.5px;width:600px;text-align:center;top:510.00px;font-size:15px;height:15px;line-height:15px;color:#f44c4c;font-weight:normal;-webkit-text-stroke:0.2px #f44c4c;">删除</div>
<div class="t" style="left:80.75px;width:600px;text-align:center;top:556.75px;font-size:17.5px;height:17.5px;line-height:17.5px;color:#1f74d2;font-weight:normal;">教练教学200元减10元</div>
<div class="t" style="left:241.25px;width:600px;text-align:center;top:556.75px;font-size:17.5px;height:17.5px;line-height:17.5px;color:#666;font-weight:normal;">代金券</div>
<div class="t" style="left:367.0px;width:600px;text-align:center;top:556.75px;font-size:17.5px;height:17.5px;line-height:17.5px;color:#666;font-weight:normal;">固定金额</div>
<div class="t" style="left:528.0px;width:600px;text-align:center;top:556.75px;font-size:17.5px;height:17.5px;line-height:17.5px;color:#666;font-weight:normal;">无门槛减10元</div>
<div class="t" style="left:689.0px;width:600px;text-align:center;top:556.75px;font-size:17.5px;height:17.5px;line-height:17.5px;color:#666;font-weight:normal;">100</div>
<div class="t" style="left:821.5px;width:600px;text-align:center;top:556.75px;font-size:17.5px;height:17.5px;line-height:17.5px;color:#1f74d2;font-weight:normal;-webkit-text-stroke:0.3px #1f74d2;">查看</div>
<div class="t" style="left:988.5px;width:600px;text-align:center;top:556.75px;font-size:17.5px;height:17.5px;line-height:17.5px;color:#666;font-weight:normal;">永久有效</div>
<div class="t" style="left:1149.0px;width:600px;text-align:center;top:556.75px;font-size:17.5px;height:17.5px;line-height:17.5px;color:#666;font-weight:normal;">大理全民健...</div>
<div class="abs" style="left:1535px;top:550.5px;width:45px;height:30px;border:2px solid #fdd45e;border-radius:3.5px"></div>
<div class="t" style="left:1257.5px;width:600px;text-align:center;top:559.00px;font-size:15px;height:15px;line-height:15px;color:#f8bd12;font-weight:normal;-webkit-text-stroke:0.35px #f8bd12;">编辑</div>
<div class="abs" style="left:1598px;top:550.5px;width:45px;height:30px;border:2px solid #fd7d7d;border-radius:3.5px"></div>
<div class="t" style="left:1320.5px;width:600px;text-align:center;top:559.00px;font-size:15px;height:15px;line-height:15px;color:#f44c4c;font-weight:normal;-webkit-text-stroke:0.2px #f44c4c;">删除</div>
<div class="t" style="left:80.75px;width:600px;text-align:center;top:605.25px;font-size:17.5px;height:17.5px;line-height:17.5px;color:#1f74d2;font-weight:normal;">周一到周五 下午两小...</div>
<div class="t" style="left:241.25px;width:600px;text-align:center;top:605.25px;font-size:17.5px;height:17.5px;line-height:17.5px;color:#666;font-weight:normal;">折扣券</div>
<div class="t" style="left:367.0px;width:600px;text-align:center;top:605.25px;font-size:17.5px;height:17.5px;line-height:17.5px;color:#666;font-weight:normal;">固定折扣</div>
<div class="t" style="left:528.0px;width:600px;text-align:center;top:605.25px;font-size:17.5px;height:17.5px;line-height:17.5px;color:#666;font-weight:normal;">无门槛打0.8折</div>
<div class="t" style="left:689.0px;width:600px;text-align:center;top:605.25px;font-size:17.5px;height:17.5px;line-height:17.5px;color:#666;font-weight:normal;">100</div>
<div class="t" style="left:821.5px;width:600px;text-align:center;top:605.25px;font-size:17.5px;height:17.5px;line-height:17.5px;color:#1f74d2;font-weight:normal;-webkit-text-stroke:0.3px #1f74d2;">查看</div>
<div class="t" style="left:988.5px;width:600px;text-align:center;top:605.25px;font-size:17.5px;height:17.5px;line-height:17.5px;color:#666;font-weight:normal;">领券当日起60天</div>
<div class="t" style="left:1149.0px;width:600px;text-align:center;top:605.25px;font-size:17.5px;height:17.5px;line-height:17.5px;color:#666;font-weight:normal;">大理全民健...</div>
<div class="abs" style="left:1535px;top:599.0px;width:45px;height:30px;border:2px solid #fdd45e;border-radius:3.5px"></div>
<div class="t" style="left:1257.5px;width:600px;text-align:center;top:607.50px;font-size:15px;height:15px;line-height:15px;color:#f8bd12;font-weight:normal;-webkit-text-stroke:0.35px #f8bd12;">编辑</div>
<div class="abs" style="left:1598px;top:599.0px;width:45px;height:30px;border:2px solid #fd7d7d;border-radius:3.5px"></div>
<div class="t" style="left:1320.5px;width:600px;text-align:center;top:607.50px;font-size:15px;height:15px;line-height:15px;color:#f44c4c;font-weight:normal;-webkit-text-stroke:0.2px #f44c4c;">删除</div>
<svg class="abs" style="left:303px;top:654px" width="12" height="17" viewBox="0 0 12 17"><path d="M10 1.5 L3 8.5 L10 15.5" stroke="#c0c0c0" stroke-width="1.5" fill="none"/></svg>
<div class="abs" style="left:332px;top:646px;width:39px;height:32px;background:#2fb36f;border-radius:2px"></div>
<div class="t" style="left:51.5px;width:600px;text-align:center;top:654.25px;font-size:15.5px;height:15.5px;line-height:15.5px;color:#fff;font-weight:normal;">1</div>
<svg class="abs" style="left:388px;top:654px" width="12" height="17" viewBox="0 0 12 17"><path d="M2 1.5 L9 8.5 L2 15.5" stroke="#c0c0c0" stroke-width="1.5" fill="none"/></svg>
<div class="t" style="left:418px;top:654.50px;font-size:15px;height:15px;line-height:15px;color:#999;font-weight:normal;">到第</div>
<div class="abs" style="left:461px;top:646px;width:50px;height:32px;border:1px solid #e2e2e2;border-radius:2px"></div>
<div class="t" style="left:190.5px;width:600px;text-align:center;top:654.50px;font-size:15px;height:15px;line-height:15px;color:#333;font-weight:normal;">1</div>
<div class="t" style="left:523px;top:654.50px;font-size:15px;height:15px;line-height:15px;color:#999;font-weight:normal;">页</div>
<div class="abs" style="left:551px;top:646px;width:57px;height:32px;border:1px solid #e2e2e2;border-radius:2px"></div>
<div class="t" style="left:279.5px;width:600px;text-align:center;top:656.00px;font-size:14px;height:14px;line-height:14px;color:#333;font-weight:normal;">确定</div>
<div class="t" style="left:620px;top:654.50px;font-size:15px;height:15px;line-height:15px;color:#333;font-weight:normal;">共 7 条</div>
<div class="abs" style="left:683px;top:646px;width:103px;height:32px;border:1px solid #e2e2e2;border-radius:2px"></div>
<div class="t" style="left:692px;top:655.25px;font-size:15.5px;height:15.5px;line-height:15.5px;color:#333;font-weight:normal;">20 条/页</div>
<div class="t" style="left:769px;top:656.50px;font-size:11px;height:11px;line-height:11px;color:#222;font-weight:normal;">▼</div>
</body></html>
